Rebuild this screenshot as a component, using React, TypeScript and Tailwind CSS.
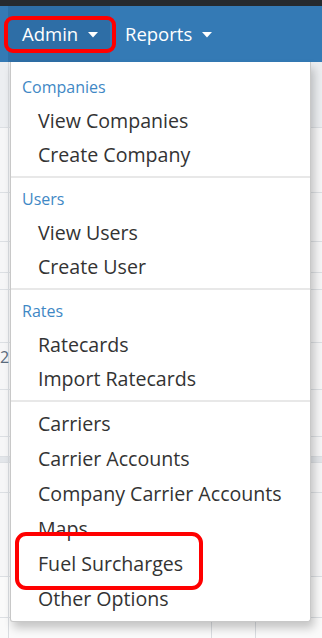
const sections = [
  { title: "Companies", items: ["View Companies", "Create Company"] },
  { title: "Users", items: ["View Users", "Create User"] },
  { title: "Rates", items: ["Ratecards", "Import Ratecards"] },
  {
    title: null,
    items: [
      "Carriers",
      "Carrier Accounts",
      "Company Carrier Accounts",
      "Maps",
      "Fuel Surcharges",
      "Other Options",
    ],
  },
];

// rows of the table sitting behind the open menu
const rows = [
  { h: 66, cls: "bg-[#eceef1]" },
  { h: 65, cls: "bg-[#f6f6f7]" },
  { h: 49, cls: "bg-[#f6f6f7]" },
  { h: 31, cls: "bg-[#f6f6f7]" },
  { h: 17, cls: "bg-[#f6f6f7]" },
  { h: 53, cls: "bg-[#f6f6f7]" },
  { h: 47, cls: "bg-[#f6f6f7]", num: "2" },
  { h: 47, cls: "bg-[#f6f6f7]" },
  { h: 20, cls: "bg-[#f6f6f7]" },
  { h: 6, cls: "bg-[#e3e6ea]" },
  { h: 30, cls: "bg-[#f6f6f7]" },
  { h: 84, cls: "bg-[#f6f6f7]" },
  { h: 41, cls: "bg-[#fafafa]" },
  { h: 40, cls: "bg-[#fafafa]" },
];

function Caret() {
  return (
    <svg width="10" height="6" viewBox="0 0 10 6" className="ml-[10px] mt-[2px]">
      <path d="M0 0h10L5 5.5z" fill="#ffffff" />
    </svg>
  );
}

export default function App() {
  return (
    <div
      className="relative h-[638px] w-[322px] overflow-hidden bg-[#f6f6f7]"
      style={{ fontFamily: '"Open Sans", "Liberation Sans", sans-serif' }}
    >
      <div className="h-[6px] bg-[#262a2e]" />
      <nav className="flex h-[56px] items-stretch bg-[#347ab5] text-[18.5px] text-white">
        <div className="ml-[8px] flex w-[102px] items-center bg-[#2e6ea6] pl-[14px]">
          Admin
          <Caret />
        </div>
        <div className="flex items-center pl-[15px]">
          Reports
          <Caret />
        </div>
      </nav>

      <div className="flex flex-col">
        {rows.map((r, i) => (
          <div
            key={i}
            style={{ height: r.h }}
            className={`flex border-b border-[#dcdfe3] ${r.cls}`}
          >
            <div className="w-[9px] border-r border-[#d9dce0] text-[16px] leading-[28px] text-[#5b6b7d]">
              {r.num ?? ""}
            </div>
            <div className="w-[203px] border-r border-[#d9dce0]" />
            <div className="w-[44px] border-r border-[#d9dce0]" />
            <div className="flex-1" />
          </div>
        ))}
      </div>

      {/* open dropdown */}
      <div className="absolute left-[10px] top-[62px] w-[301px] rounded-b-[3px] border border-t-0 border-[#c8c8c8] bg-white pt-[8px] pb-[5px] shadow-[3px_6px_10px_rgba(0,0,0,0.22)]">
        {sections.map((s, i) => (
          <div key={i}>
            {i > 0 && <div className="my-[4px] h-[2px] bg-[#e8e8e8]" />}
            {s.title && (
              <div className="flex h-[34px] items-center pl-[11px] text-[16px] text-[#3f88c5]">
                {s.title}
              </div>
            )}
            {s.items.map((it) => (
              <div
                key={it}
                className={`flex items-center pl-[27px] text-[19.6px] text-[#333333] ${
                  s.title ? "h-[34px]" : "h-[35px]"
                }`}
              >
                {it}
              </div>
            ))}
          </div>
        ))}
      </div>

      {/* red highlight annotations */}
      <div className="absolute left-[4px] top-[16px] h-[37px] w-[112px] rounded-[9px] border-[4px] border-[#ff0000]" />
      <div className="absolute left-[15px] top-[532px] h-[58px] w-[188px] rounded-[11px] border-[4px] border-[#ff0000]" />
    </div>
  );
}
